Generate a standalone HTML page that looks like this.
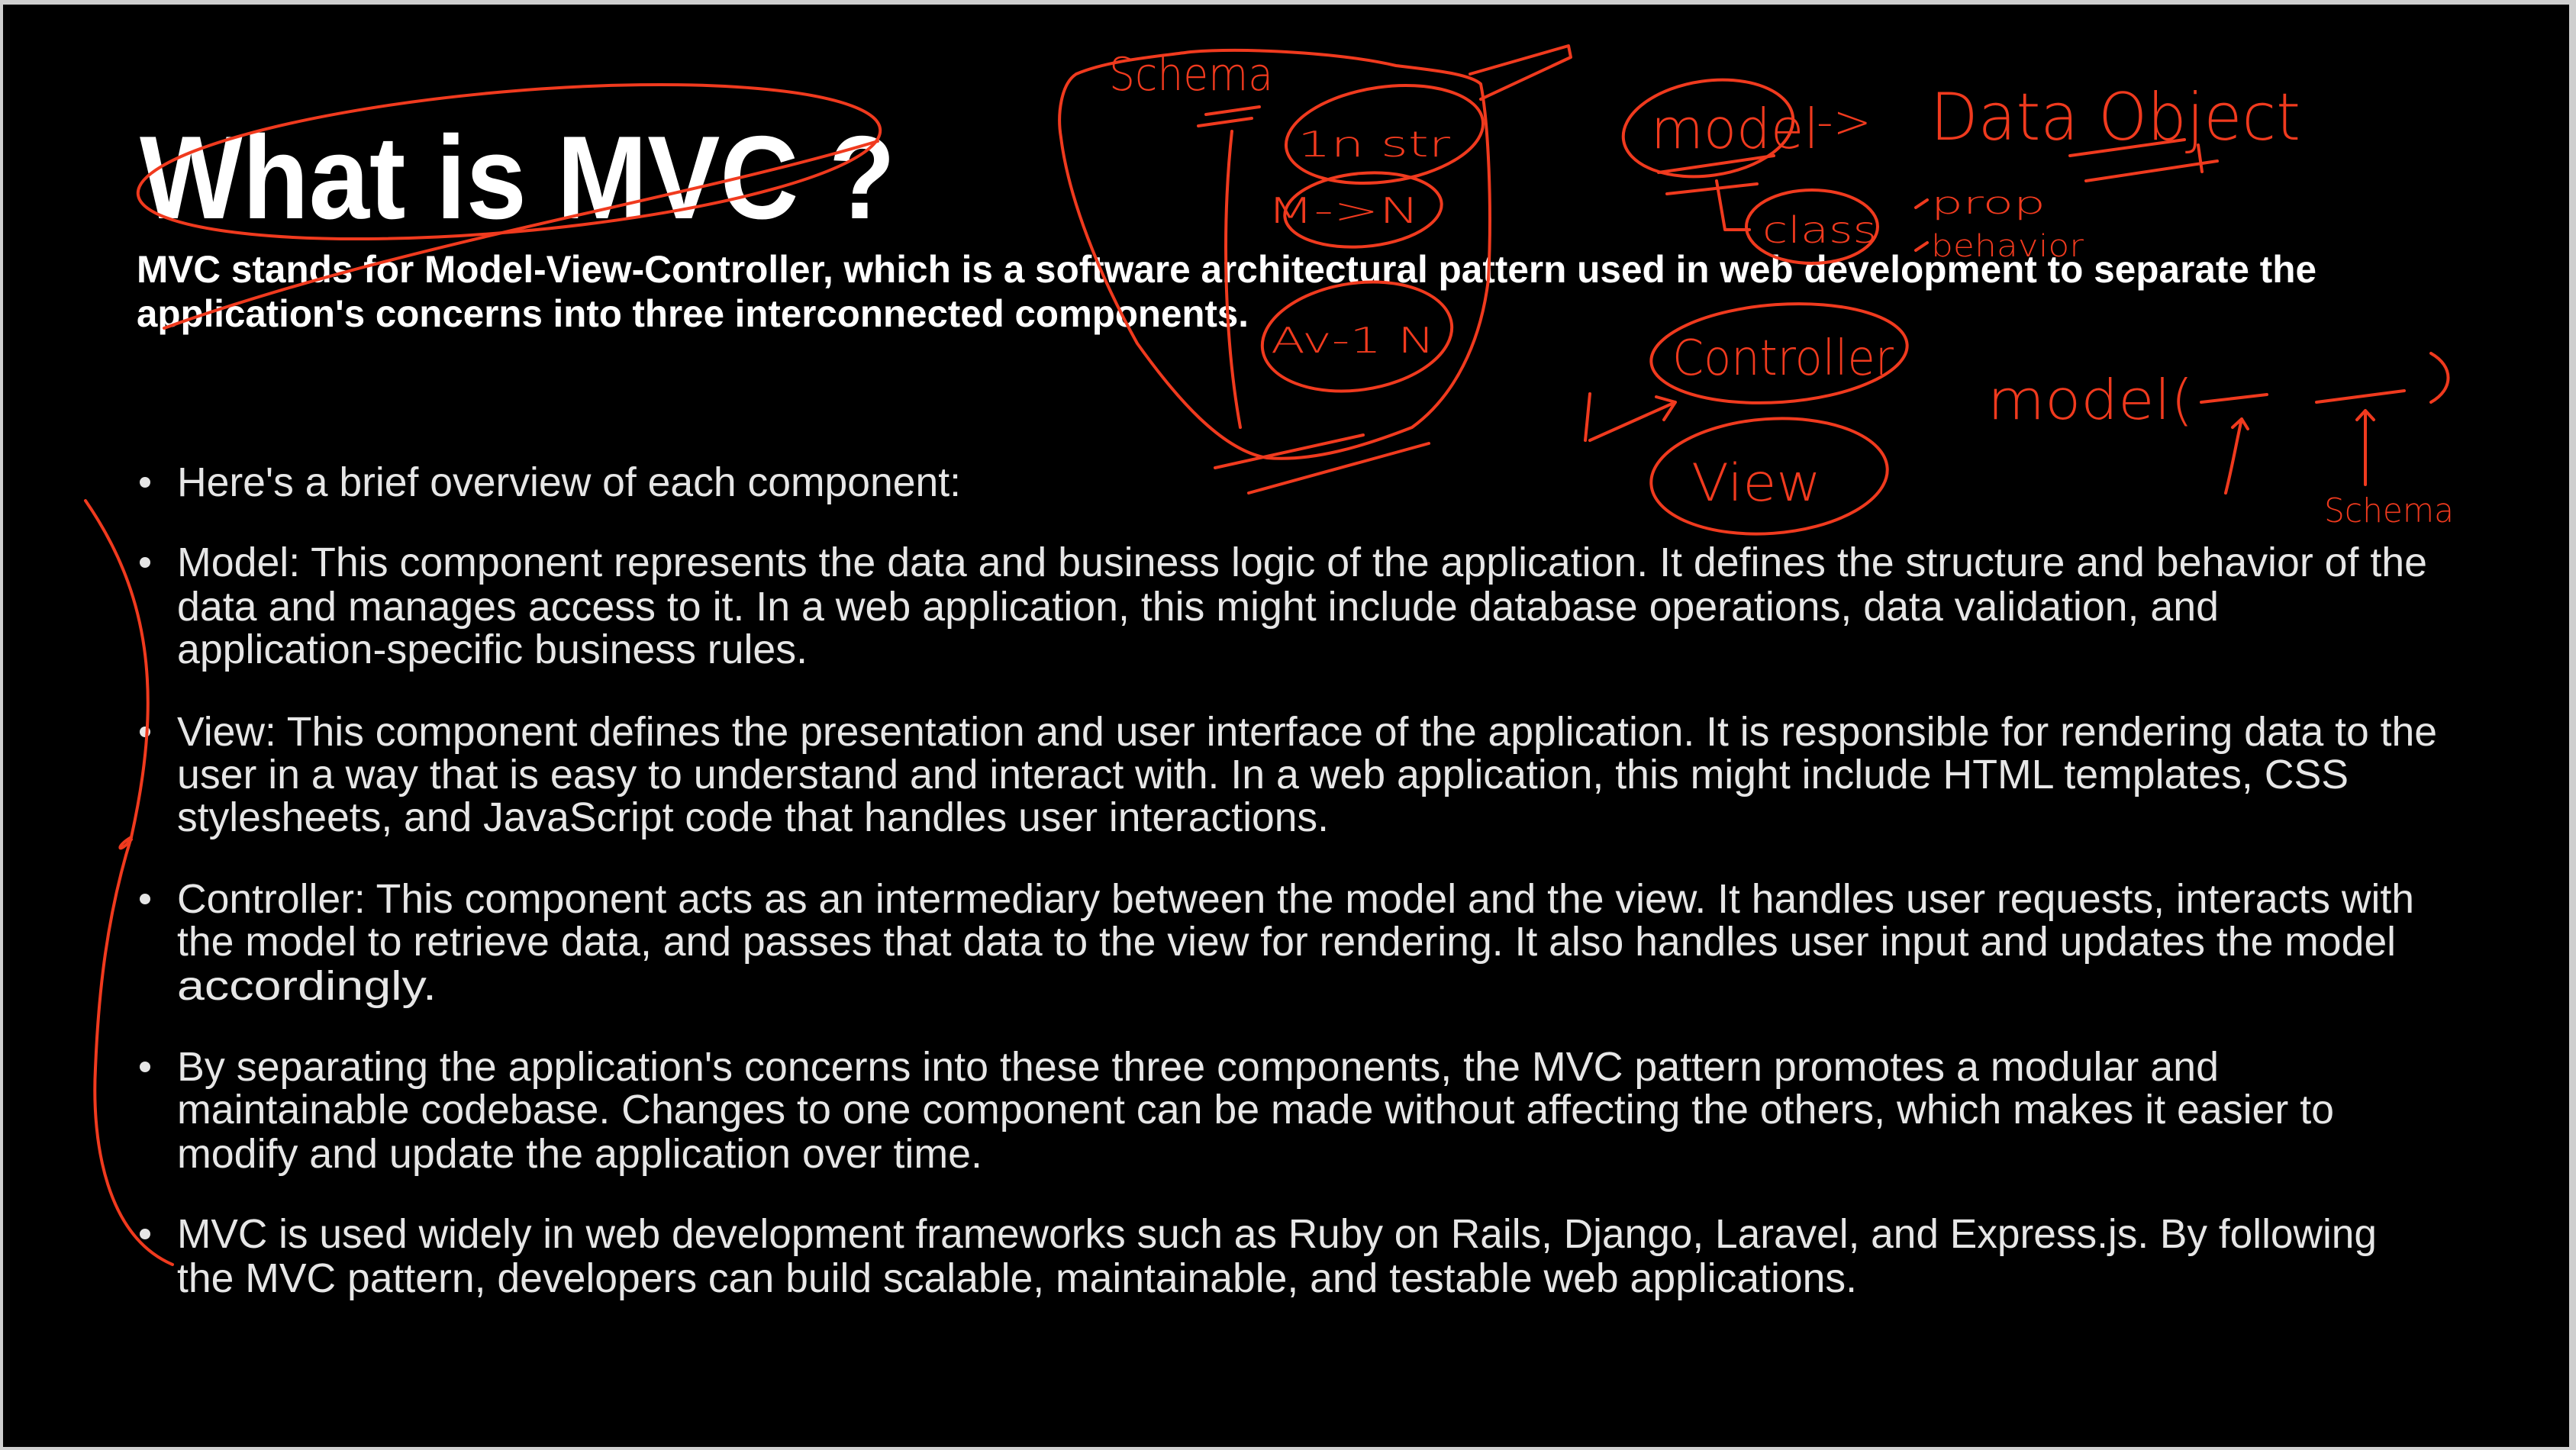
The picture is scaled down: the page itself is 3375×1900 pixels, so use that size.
<!DOCTYPE html>
<html><head><meta charset="utf-8"><style>
html,body{margin:0;padding:0;background:#cfcfcf;}
#s{position:absolute;left:0;top:0;width:3375px;height:1900px;overflow:hidden;background:#cfcfcf;}
svg{position:absolute;left:0;top:0;}
</style></head><body><div id="s">
<svg width="3375" height="1900" viewBox="0 0 3375 1900" xmlns="http://www.w3.org/2000/svg">
<rect x="4" y="6" width="3362" height="1890" fill="#000"/>
<g font-family="Liberation Sans, Arial, sans-serif" fill="#fff">
<text x="183" y="286" font-size="155" font-weight="bold" textLength="990" lengthAdjust="spacingAndGlyphs">What is MVC ?</text>
<text x="179" y="370" font-size="50" font-weight="bold" textLength="2856" lengthAdjust="spacingAndGlyphs">MVC stands for Model-View-Controller, which is a software architectural pattern used in web development to separate the</text>
<text x="179" y="428" font-size="50" font-weight="bold" textLength="1457" lengthAdjust="spacingAndGlyphs">application's concerns into three interconnected components.</text>
</g>
<g font-family="Liberation Sans, Arial, sans-serif" fill="#e6e6e6" font-size="54">
<text x="232" y="650" textLength="1027" lengthAdjust="spacingAndGlyphs">Here's a brief overview of each component:</text>
<text x="232" y="755" textLength="2948" lengthAdjust="spacingAndGlyphs">Model: This component represents the data and business logic of the application. It defines the structure and behavior of the</text>
<text x="232" y="813" textLength="2675" lengthAdjust="spacingAndGlyphs">data and manages access to it. In a web application, this might include database operations, data validation, and</text>
<text x="232" y="869" textLength="826" lengthAdjust="spacingAndGlyphs">application-specific business rules.</text>
<text x="232" y="977" textLength="2961" lengthAdjust="spacingAndGlyphs">View: This component defines the presentation and user interface of the application. It is responsible for rendering data to the</text>
<text x="232" y="1033" textLength="2845" lengthAdjust="spacingAndGlyphs">user in a way that is easy to understand and interact with. In a web application, this might include HTML templates, CSS</text>
<text x="232" y="1089" textLength="1509" lengthAdjust="spacingAndGlyphs">stylesheets, and JavaScript code that handles user interactions.</text>
<text x="232" y="1196" textLength="2931" lengthAdjust="spacingAndGlyphs">Controller: This component acts as an intermediary between the model and the view. It handles user requests, interacts with</text>
<text x="232" y="1252" textLength="2907" lengthAdjust="spacingAndGlyphs">the model to retrieve data, and passes that data to the view for rendering. It also handles user input and updates the model</text>
<text x="232" y="1310" textLength="340" lengthAdjust="spacingAndGlyphs">accordingly.</text>
<text x="232" y="1416" textLength="2675" lengthAdjust="spacingAndGlyphs">By separating the application's concerns into these three components, the MVC pattern promotes a modular and</text>
<text x="232" y="1472" textLength="2826" lengthAdjust="spacingAndGlyphs">maintainable codebase. Changes to one component can be made without affecting the others, which makes it easier to</text>
<text x="232" y="1530" textLength="1055" lengthAdjust="spacingAndGlyphs">modify and update the application over time.</text>
<text x="232" y="1635" textLength="2882" lengthAdjust="spacingAndGlyphs">MVC is used widely in web development frameworks such as Ruby on Rails, Django, Laravel, and Express.js. By following</text>
<text x="232" y="1693" textLength="2201" lengthAdjust="spacingAndGlyphs">the MVC pattern, developers can build scalable, maintainable, and testable web applications.</text>
</g>
<g fill="#e6e6e6">
<circle cx="190" cy="632" r="7"/><circle cx="190" cy="737" r="7"/><circle cx="190" cy="959" r="7"/>
<circle cx="190" cy="1178" r="7"/><circle cx="190" cy="1398" r="7"/><circle cx="190" cy="1617" r="7"/>
</g>
<g fill="none" stroke="#f03a1e" stroke-width="4" stroke-linecap="round" stroke-linejoin="round">
<ellipse cx="667" cy="212" rx="488" ry="92" transform="rotate(-5 667 212)"/>
<path d="M215 430 C520 320 900 260 1150 185"/>
<path d="M1410 97 C1450 80 1506 75 1560 68 C1636 62 1760 70 1829 86 C1880 92 1926 97 1940 110 C1950 160 1955 270 1950 366 C1940 450 1905 520 1850 560 C1786 585 1720 605 1660 600 C1600 590 1540 520 1490 450 C1440 360 1400 260 1390 180 C1385 150 1390 110 1410 97"/>
<path d="M1926 97 L2055 60 L2058 75 L1940 130"/>
<path d="M1592 613 L1786 570 M1636 646 L1872 581"/>
<path d="M1614 172 C1600 300 1605 450 1625 560"/>
<path d="M1580 150 L1650 140 M1570 165 L1640 155"/>
<ellipse cx="1814" cy="176" rx="130" ry="62" transform="rotate(-8 1814 176)"/>
<ellipse cx="1786" cy="275" rx="103" ry="48" transform="rotate(-5 1786 275)"/>
<ellipse cx="1778" cy="441" rx="125" ry="70" transform="rotate(-8 1778 441)"/>
<ellipse cx="2238" cy="168" rx="112" ry="62" transform="rotate(-8 2238 168)"/>
<ellipse cx="2374" cy="297" rx="86" ry="48"/>
<ellipse cx="2331" cy="463" rx="168" ry="64" transform="rotate(-4 2331 463)"/>
<ellipse cx="2318" cy="624" rx="155" ry="75" transform="rotate(-4 2318 624)"/>
<path d="M2712 204 L2862 183 M2733 237 L2905 211 M2880 190 L2885 225"/>
<path d="M2173 226 L2324 204 M2184 254 L2302 241"/>
<path d="M2249 237 L2260 301 L2292 301"/>
<path d="M2077 577 L2083 516 M2083 577 L2195 527 M2170 520 L2195 527 L2180 550"/>
<path d="M2916 646 C2925 610 2930 580 2937 549 M2925 560 L2937 549 L2945 562"/>
<path d="M3099 635 L3099 538 M3088 550 L3099 538 L3110 550"/>
<path d="M3185 463 C3215 480 3215 510 3185 527"/>
<path d="M2884 527 L2970 517 M3035 527 L3150 512"/>
<path d="M2510 272 L2525 262 M2510 328 L2525 318"/>
<path d="M112 656 C194 775 215 904 172 1097 C140 1200 129 1300 125 1400 C120 1500 140 1620 226 1657"/>
<path d="M172 1097 C150 1110 155 1120 172 1100"/>
</g>
<g font-family="DejaVu Sans, Liberation Sans, sans-serif" fill="#f03a1e" font-weight="200">
<text x="1453" y="118" font-size="60" textLength="215" lengthAdjust="spacingAndGlyphs">Schema</text>
<text x="1700" y="205" font-size="46" textLength="200" lengthAdjust="spacingAndGlyphs">1n str</text>
<text x="1660" y="292" font-size="46" textLength="200" lengthAdjust="spacingAndGlyphs">M-&gt;N</text>
<text x="1665" y="462" font-size="46" textLength="215" lengthAdjust="spacingAndGlyphs">Av-1 N</text>
<text x="2163" y="194" font-size="72" textLength="220" lengthAdjust="spacingAndGlyphs">model</text>
<text x="2380" y="180" font-size="60">-&gt;</text>
<text x="2529" y="183" font-size="86" textLength="485" lengthAdjust="spacingAndGlyphs">Data Object</text>
<text x="2309" y="318" font-size="48" textLength="150" lengthAdjust="spacingAndGlyphs">class</text>
<text x="2530" y="280" font-size="40" textLength="150" lengthAdjust="spacingAndGlyphs">prop</text>
<text x="2530" y="336" font-size="40" textLength="200" lengthAdjust="spacingAndGlyphs">behavior</text>
<text x="2191" y="491" font-size="64" textLength="290" lengthAdjust="spacingAndGlyphs">Controller</text>
<text x="2216" y="656" font-size="68" textLength="170" lengthAdjust="spacingAndGlyphs">View</text>
<text x="2604" y="549" font-size="72" textLength="270" lengthAdjust="spacingAndGlyphs">model(</text>
<text x="3045" y="684" font-size="44" textLength="170" lengthAdjust="spacingAndGlyphs">Schema</text>
</g>
</svg>
</div></body></html>
